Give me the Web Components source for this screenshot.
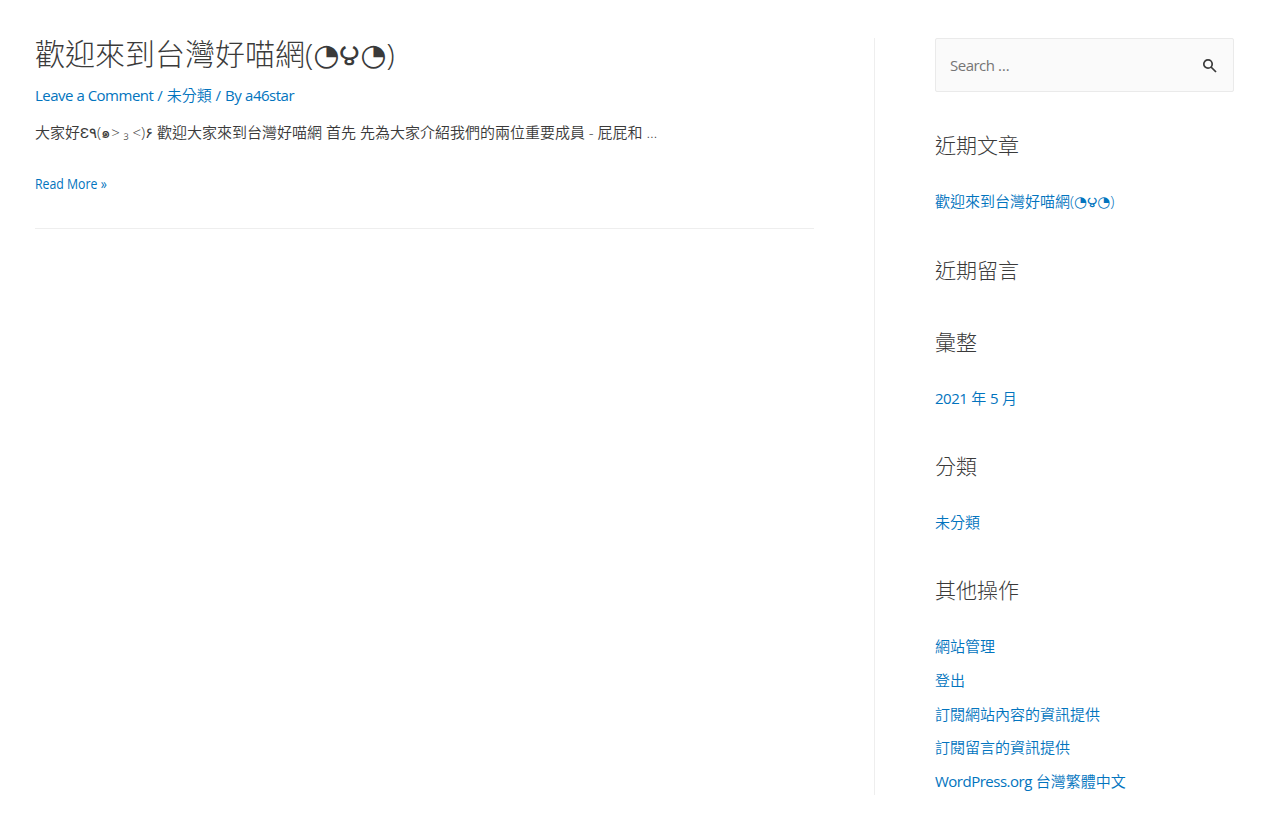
<!DOCTYPE html>
<html lang="zh-TW">
<head>
<meta charset="utf-8">
<title>台灣好喵網</title>
<style>
  html, body { margin: 0; background: #fff; }
  body { font-family: "Open Sans", "Noto Sans CJK TC", sans-serif; color: #3a3a3a; font-size: 15px; }
</style>
</head>
<body>
<blog-page>
  <blog-post slot="main"></blog-post>
  <side-bar slot="side"></side-bar>
</blog-page>

<script>
const FONT = `"Open Sans", "Noto Sans CJK TC", sans-serif`;

// estilos compartidos: latin mas estrecho y cara del gato con DejaVu
const TEXT_CSS = `
  .l { letter-spacing: -0.5px; font-weight: 400; }
  .e { font-family: "DejaVu Sans", sans-serif; font-weight: 400; }
  .c { font-weight: 350; }
`;
const FACE = `(<span class="e">◔౪◔</span>)`;

// layout general: columna principal y barra lateral
class BlogPage extends HTMLElement {
  constructor () {
    super();
    this.attachShadow({ mode: 'open' });
    this.shadowRoot.innerHTML = `
      <style>
        :host { display: flex; height: 833px; box-sizing: border-box; padding: 38px 29px 38px 35px; font-family: ${FONT}; overflow: hidden; }
        .main { width: 779px; flex: none; }
        .side { margin-left: 60px; padding-left: 60px; border-left: 1px solid #eee; width: 299px; flex: none; }
      </style>
      <div class="main"><slot name="main"></slot></div>
      <div class="side"><slot name="side"></slot></div>
    `;
  }
}

class BlogPost extends HTMLElement {
  constructor () {
    super();
    this.attachShadow({ mode: 'open' });
    this.shadowRoot.innerHTML = `
      <style>
        ${ TEXT_CSS }
        :host { display: block; border-bottom: 1px solid #eee; height: 191px; box-sizing: content-box; }
        a { color: #0274be; text-decoration: none; }
        h2 { margin: -1px 0 0; font-size: 30px; line-height: 34px; font-weight: 300; color: #3a3a3a; }
        .meta { margin-top: 13px; font-size: 15px; line-height: 20px; color: #0274be; font-weight: 400; }
        p { margin: 17px 0 0; font-size: 15px; line-height: 20px; color: #3a3a3a; white-space: nowrap; font-weight: 350; }
        .more { display: inline-block; margin-top: 31px; font-size: 15px; line-height: 20px; font-weight: 400; transform: scaleX(.82); transform-origin: left; }
      </style>
      <h2>歡迎來到台灣好喵網${ FACE }</h2>
      <div class="meta"><a href="#" class="l">Leave a Comment</a> / <a href="#" class="c">未分類</a> / <span class="l">By</span> <a href="#" class="l">a46star</a></div>
      <p>大家好Ɛ٩(๑&gt; ₃ &lt;)۶ 歡迎大家來到台灣好喵網 首先 先為大家介紹我們的兩位重要成員 - 屁屁和 …</p>
      <a class="more" href="#">Read More »</a>
    `;
  }
}

class SearchBox extends HTMLElement {
  constructor () {
    super();
    this.attachShadow({ mode: 'open' });
    this.shadowRoot.innerHTML = `
      <style>
        ${ TEXT_CSS }
        :host { display: flex; align-items: center; justify-content: space-between; height: 54px; box-sizing: border-box; border: 1px solid #eaeaea; border-radius: 2px; background: #fafafa; padding: 0 16px 0 14px; }
        span { font-size: 15px; color: #757575; }
        svg { display: block; }
      </style>
      <span class="l">Search …</span>
      <svg width="15" height="15" viewBox="0 0 15 15" fill="none" stroke="#3a3a3a" stroke-width="1.7"><circle cx="6" cy="6" r="4.2"/><path d="M9 9l5 5"/></svg>
    `;
  }
}

class SideWidget extends HTMLElement {
  constructor () {
    super();
    this.attachShadow({ mode: 'open' });
    const title = this.getAttribute('title') ?? '';
    const empty = this.children.length === 0;
    this.shadowRoot.innerHTML = `
      <style>
        :host { display: block; margin-top: 44px; }
        :host([first]) { margin-top: 39px; }
        h3 { margin: 0; font-size: 21px; line-height: 28px; font-weight: 300; color: #3a3a3a; }
        h3.solo { margin-bottom: 1px; }
        .items { margin-top: 32px; display: flex; flex-direction: column; gap: 13.75px; }
        ::slotted(a) { display: block; color: #0274be; text-decoration: none; font-size: 15px; line-height: 20px; font-weight: 350; }
      </style>
      <h3 class="${ empty ? 'solo' : '' }">${ title }</h3>
      ${ empty ? '' : '<div class="items"><slot></slot></div>' }
    `;
  }
}

class SideBar extends HTMLElement {
  constructor () {
    super();
    this.attachShadow({ mode: 'open' });
    this.shadowRoot.innerHTML = `
      <style>
        ${ TEXT_CSS }
        :host { display: block; height: 757px; }
      </style>
      <search-box></search-box>
      <side-widget first title="近期文章"><a href="#">歡迎來到台灣好喵網${ FACE }</a></side-widget>
      <side-widget title="近期留言"></side-widget>
      <side-widget title="彙整"><a href="#"><span class="l">2021</span> 年 <span class="l">5</span> 月</a></side-widget>
      <side-widget title="分類"><a href="#">未分類</a></side-widget>
      <side-widget title="其他操作">
        <a href="#">網站管理</a>
        <a href="#">登出</a>
        <a href="#">訂閱網站內容的資訊提供</a>
        <a href="#">訂閱留言的資訊提供</a>
        <a href="#"><span class="l">WordPress.org</span> 台灣繁體中文</a>
      </side-widget>
    `;
  }
}

customElements.define('search-box', SearchBox);
customElements.define('side-widget', SideWidget);
customElements.define('side-bar', SideBar);
customElements.define('blog-post', BlogPost);
customElements.define('blog-page', BlogPage);
</script>
</body>
</html>
